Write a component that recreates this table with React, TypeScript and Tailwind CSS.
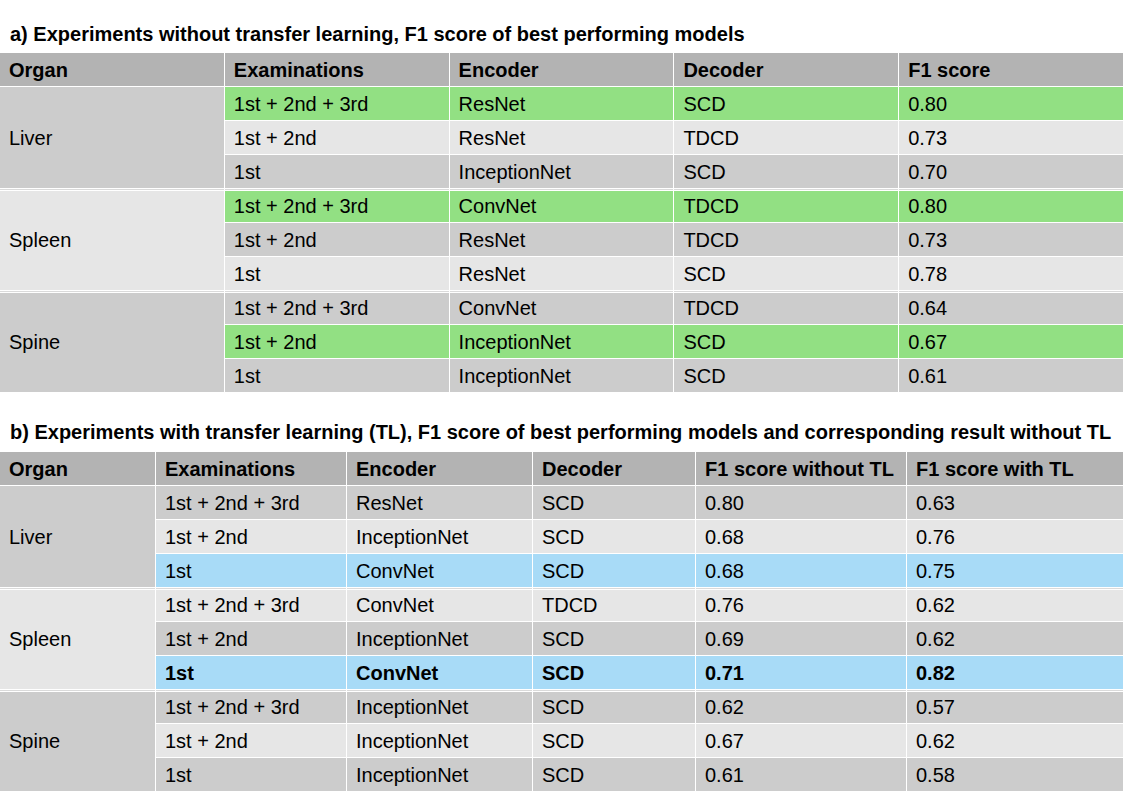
import React from 'react'

type Row = { cells: string[]; bg: string; bold?: boolean }
type Group = { organ: string; organBg: string; rows: Row[] }

const G = 'bg-[#92e083]'
const B = 'bg-[#a8dbf7]'
const D = 'bg-[#cccccc]'
const L = 'bg-[#e6e6e6]'

const tableA: Group[] = [
  {
    organ: 'Liver',
    organBg: D,
    rows: [
      { cells: ['1st + 2nd + 3rd', 'ResNet', 'SCD', '0.80'], bg: G },
      { cells: ['1st + 2nd', 'ResNet', 'TDCD', '0.73'], bg: L },
      { cells: ['1st', 'InceptionNet', 'SCD', '0.70'], bg: D },
    ],
  },
  {
    organ: 'Spleen',
    organBg: L,
    rows: [
      { cells: ['1st + 2nd + 3rd', 'ConvNet', 'TDCD', '0.80'], bg: G },
      { cells: ['1st + 2nd', 'ResNet', 'TDCD', '0.73'], bg: D },
      { cells: ['1st', 'ResNet', 'SCD', '0.78'], bg: L },
    ],
  },
  {
    organ: 'Spine',
    organBg: D,
    rows: [
      { cells: ['1st + 2nd + 3rd', 'ConvNet', 'TDCD', '0.64'], bg: D },
      { cells: ['1st + 2nd', 'InceptionNet', 'SCD', '0.67'], bg: G },
      { cells: ['1st', 'InceptionNet', 'SCD', '0.61'], bg: D },
    ],
  },
]

const tableB: Group[] = [
  {
    organ: 'Liver',
    organBg: D,
    rows: [
      { cells: ['1st + 2nd + 3rd', 'ResNet', 'SCD', '0.80', '0.63'], bg: D },
      { cells: ['1st + 2nd', 'InceptionNet', 'SCD', '0.68', '0.76'], bg: L },
      { cells: ['1st', 'ConvNet', 'SCD', '0.68', '0.75'], bg: B },
    ],
  },
  {
    organ: 'Spleen',
    organBg: L,
    rows: [
      { cells: ['1st + 2nd + 3rd', 'ConvNet', 'TDCD', '0.76', '0.62'], bg: L },
      { cells: ['1st + 2nd', 'InceptionNet', 'SCD', '0.69', '0.62'], bg: D },
      { cells: ['1st', 'ConvNet', 'SCD', '0.71', '0.82'], bg: B, bold: true },
    ],
  },
  {
    organ: 'Spine',
    organBg: D,
    rows: [
      { cells: ['1st + 2nd + 3rd', 'InceptionNet', 'SCD', '0.62', '0.57'], bg: D },
      { cells: ['1st + 2nd', 'InceptionNet', 'SCD', '0.67', '0.62'], bg: L },
      { cells: ['1st', 'InceptionNet', 'SCD', '0.61', '0.58'], bg: D },
    ],
  },
]

// double line at the top of every group after the first
const sep = 'shadow-[inset_0_1px_0_#dadada,inset_0_2px_0_#ffffff]'

const Table = ({ cols, headers, groups }: { cols: string; headers: string[]; groups: Group[] }) => (
  <div className='flex flex-col gap-px bg-white'>
    <div className={`grid ${cols} gap-px`}>
      {headers.map((h) => (
        <div key={h} className='h-[33px] bg-[#b3b3b3] flex items-center pl-[9px] font-bold'>{h}</div>
      ))}
    </div>
    {groups.map((g, gi) => (
      <div key={g.organ} className={`grid ${cols} grid-rows-[33px_33px_33px] gap-px`}>
        <div className={`row-span-3 ${g.organBg} ${gi > 0 ? sep : ''} flex items-center pl-[9px]`}>{g.organ}</div>
        {g.rows.map((r, ri) =>
          r.cells.map((c, ci) => (
            <div
              key={ri + '-' + ci}
              className={`${r.bg} ${gi > 0 && ri === 0 ? sep : ''} ${r.bold ? 'font-bold' : ''} flex items-center pl-[9px]`}
            >
              {c}
            </div>
          ))
        )}
      </div>
    ))}
  </div>
)

const App = () => {
  return (
    <div className="w-[1123px] h-[794px] overflow-hidden bg-white text-black text-[20px] font-['Liberation_Sans',Arial,sans-serif] pt-[22px]">
      <h2 className='h-[24px] leading-[24px] text-[20px] font-bold pl-[10px] mb-[7px]'>
        a) Experiments without transfer learning, F1 score of best performing models
      </h2>
      <Table
        cols='grid-cols-5'
        headers={['Organ', 'Examinations', 'Encoder', 'Decoder', 'F1 score']}
        groups={tableA}
      />
      <h2 className='h-[24px] leading-[24px] text-[20px] font-bold pl-[10px] mt-[28px] mb-[8px]'>
        b) Experiments with transfer learning (TL), F1 score of best performing models and corresponding result without TL
      </h2>
      <Table
        cols='grid-cols-[155px_190px_185px_162px_210px_216px]'
        headers={['Organ', 'Examinations', 'Encoder', 'Decoder', 'F1 score without TL', 'F1 score with TL']}
        groups={tableB}
      />
    </div>
  )
}

export default App
